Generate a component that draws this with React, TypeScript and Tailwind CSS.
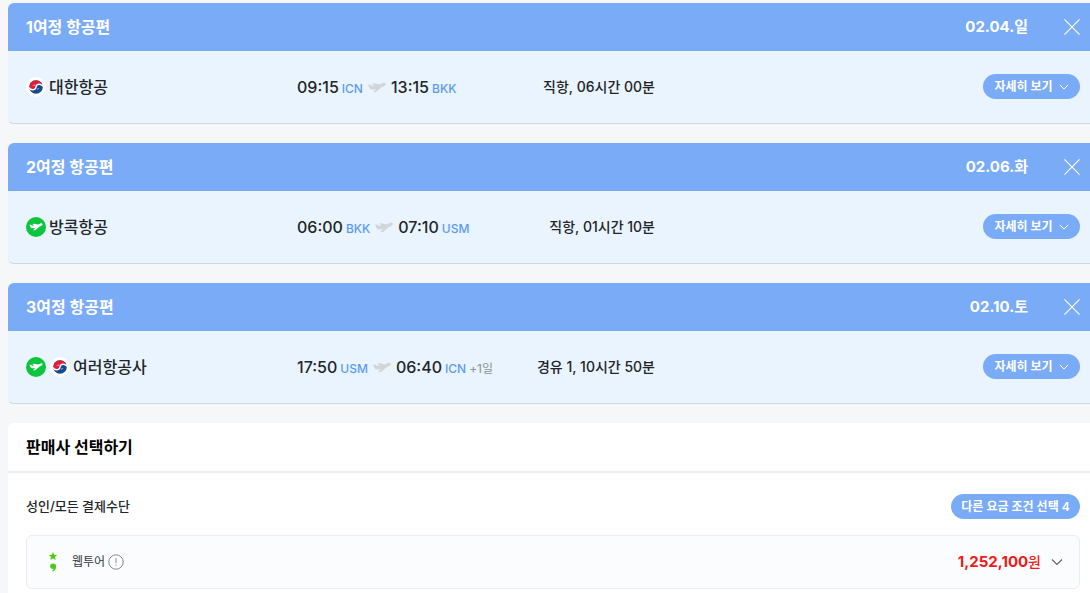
import React from 'react';

interface Flight {
    id: number;
    title: string;
    date: string;
    airline: string;
    logos: ('korean' | 'bangkok')[];
    departTime: string;
    departCode: string;
    arriveTime: string;
    arriveCode: string;
    dayOffset?: string;
    duration: string;
}

const flights: Flight[] = [
    {
        id: 1,
        title: '1여정 항공편',
        date: '02.04.일',
        airline: '대한항공',
        logos: ['korean'],
        departTime: '09:15',
        departCode: 'ICN',
        arriveTime: '13:15',
        arriveCode: 'BKK',
        duration: '직항, 06시간 00분',
    },
    {
        id: 2,
        title: '2여정 항공편',
        date: '02.06.화',
        airline: '방콕항공',
        logos: ['bangkok'],
        departTime: '06:00',
        departCode: 'BKK',
        arriveTime: '07:10',
        arriveCode: 'USM',
        duration: '직항, 01시간 10분',
    },
    {
        id: 3,
        title: '3여정 항공편',
        date: '02.10.토',
        airline: '여러항공사',
        logos: ['bangkok', 'korean'],
        departTime: '17:50',
        departCode: 'USM',
        arriveTime: '06:40',
        arriveCode: 'ICN',
        dayOffset: '+1일',
        duration: '경유 1, 10시간 50분',
    },
];

const planePath =
    'M0 3.8 1.8 3.6 4.2 5 6.4 4.6 4 2.8 6.8 2.2 11.4 3.4 14.4 2.2C16.2 1.5 17.7 1.9 17.8 2.9 17.8 4 16 5.1 13.8 6.1L8.4 10.8 5 11.4 7.6 8 4.4 8.4C3 8.500 2.200 8 1.600 7.200Z';

const PlaneIcon = () => (
    <svg viewBox="0 0 18 12" className="h-3 w-[18px] fill-[#d0d5da]" aria-hidden="true">
        <path d={planePath} />
    </svg>
);

const ChevronIcon = ({ className }: { className: string }) => (
    <svg viewBox="0 0 12 8" className={className} fill="none" stroke="currentColor" strokeWidth="1.2" aria-hidden="true">
        <path d="m1 1.5 5 5 5-5" />
    </svg>
);

const AirlineLogo = ({ type }: { type: 'korean' | 'bangkok' }) => {
    if (type === 'bangkok') {
        return (
            <svg viewBox="0 0 20 20" className="size-5" aria-hidden="true">
                <circle cx="10" cy="10" r="10" fill="#0bc63c" />
                <path d={planePath} fill="#fff" transform="translate(3.4 5) scale(.74)" />
            </svg>
        );
    }
    return (
        <svg viewBox="0 0 20 20" className="size-5" aria-hidden="true">
            <circle cx="10" cy="10" r="10" fill="#fff" />
            <circle cx="10" cy="10" r="6.8" fill="#0f4c91" />
            <path d="M3.2 10a6.8 6.8 0 0 1 13.6 0A3.4 3.4 0 0 0 10 10a3.4 3.4 0 0 1-6.800 0Z" fill="#e11d38" />
            <path
                d="M3 10.600C4.600 13.600 9.600 13.600 10 10S15.400 6.400 17 9.400"
                fill="none"
                stroke="#fff"
                strokeWidth="1.4"
            />
            <path d="M7 8.800c.5-.8 1.300-1 2.200-.7M13 11.200c-.5.8-1.300 1-2.200.7" fill="none" stroke="#fff" strokeWidth=".6" />
        </svg>
    );
};

const FlightCard = ({ flight }: { flight: Flight }) => (
    <section className="overflow-hidden rounded-l-md border-b border-[#cbd8e6] bg-[#e9f4fe]">
        <header className="flex h-12 items-center bg-[#7aabf7] pl-[18px] pr-[10px] font-bold text-white">
            <h2 className="flex-1 text-base">{flight.title}</h2>
            <span className="text-[15px]">{flight.date}</span>
            <button type="button" aria-label="닫기" className="ml-9">
                <svg viewBox="0 0 18 18" className="size-4" fill="none" stroke="currentColor" strokeWidth="1.3">
                    <path d="m.5.5 17 17M17.5.5.5 17.5" />
                </svg>
            </button>
        </header>
        <div className="flex h-18 items-center pb-px pl-[18px] pr-[10px] text-[#222529]">
            <div className="flex w-[271px] items-center gap-[3px]">
                <span className="flex gap-1">
                    {flight.logos.map(logo => (
                        <AirlineLogo key={logo} type={logo} />
                    ))}
                </span>
                <span className="text-base font-medium">{flight.airline}</span>
            </div>
            <div className="flex items-baseline gap-[3px] text-base font-medium">
                <span>{flight.departTime}</span>
                <span className="text-xs text-[#5c9bf5]">{flight.departCode}</span>
                <span className="mx-[2px] self-center pt-px">
                    <PlaneIcon />
                </span>
                <span>{flight.arriveTime}</span>
                <span className="text-xs text-[#5c9bf5]">{flight.arriveCode}</span>
                {flight.dayOffset && <span className="text-xs font-normal text-[#8b929a]">{flight.dayOffset}</span>}
            </div>
            <div className="ml-auto flex w-[541px] shrink-0 items-center justify-between">
                <span className="flex w-[116px] justify-end whitespace-nowrap text-sm font-medium">{flight.duration}</span>
                <button
                    type="button"
                    className="flex h-[25px] w-[97px] items-center justify-center gap-[6px] rounded-full bg-[#7aabf7] text-xs font-semibold text-white"
                >
                    자세히 보기
                    <ChevronIcon className="h-2 w-[10px]" />
                </button>
            </div>
        </div>
    </section>
);

const App = () => {
    return (
        <main className="min-h-screen bg-[#f5f7f9] pl-2 pt-[3px] font-['Inter','Noto_Sans_CJK_KR',sans-serif]">
            <div className="flex flex-col gap-[19px]">
                {flights.map(flight => (
                    <FlightCard key={flight.id} flight={flight} />
                ))}

                <section className="rounded-tl-md bg-white">
                    <h2 className="flex h-[50px] items-center border-b-2 border-[#eaedf0] pl-[18px] text-base font-bold text-black">
                        판매사 선택하기
                    </h2>
                    <div className="pb-4 pl-[18px] pr-[10px] pt-[21px]">
                        <div className="flex items-center justify-between">
                            <h3 className="text-[13px] font-medium text-[#222529]">성인/모든 결제수단</h3>
                            <button
                                type="button"
                                className="h-[25px] w-[129px] rounded-full bg-[#7aabf7] text-xs font-semibold text-white"
                            >
                                다른 요금 조건 선택 4
                            </button>
                        </div>
                        <div className="mt-4 flex h-[54px] items-center rounded-md border border-[#eaedf0] bg-[#fafcfd] pl-[21px] pr-4">
                            <svg viewBox="0 0 10 20" className="h-5 w-[10px] fill-[#4fcb17]" aria-hidden="true">
                                <path d="m5 0 1.2 2.8 3.1.3-2.4 2 .8 3L5 6.5 2.3 8.1l.8-3-2.4-2 3.1-.3Z" />
                                <path d="M5 11.4c2 0 3.2 1.2 3.2 3 0 2.6-1.4 4.4-3.6 5.2l-.4-.8c1-.6 1.5-1.2 1.5-2C3.5 17.2 2 16 2 14.3c0-1.7 1.3-2.9 3-2.9Z" />
                            </svg>
                            <span className="ml-[14px] text-xs text-[#33373c]">웹투어</span>
                            <button type="button" aria-label="판매사 정보" className="ml-[3px] text-[#85898e]">
                                <svg viewBox="0 0 16 16" className="size-4" fill="none" stroke="currentColor">
                                    <circle cx="8" cy="8" r="7.2" />
                                    <path d="M8 4.2v4.8M8 10.5v1.2" />
                                </svg>
                            </button>
                            <span className="ml-auto text-[15px] font-bold text-[#f01818]">
                                1,252,100<span className="text-sm font-medium">원</span>
                            </span>
                            <button type="button" aria-label="요금 상세 열기" className="ml-[10px] text-[#62676d]">
                                <ChevronIcon className="h-2 w-3" />
                            </button>
                        </div>
                    </div>
                </section>
            </div>
        </main>
    );
};

export default App;
